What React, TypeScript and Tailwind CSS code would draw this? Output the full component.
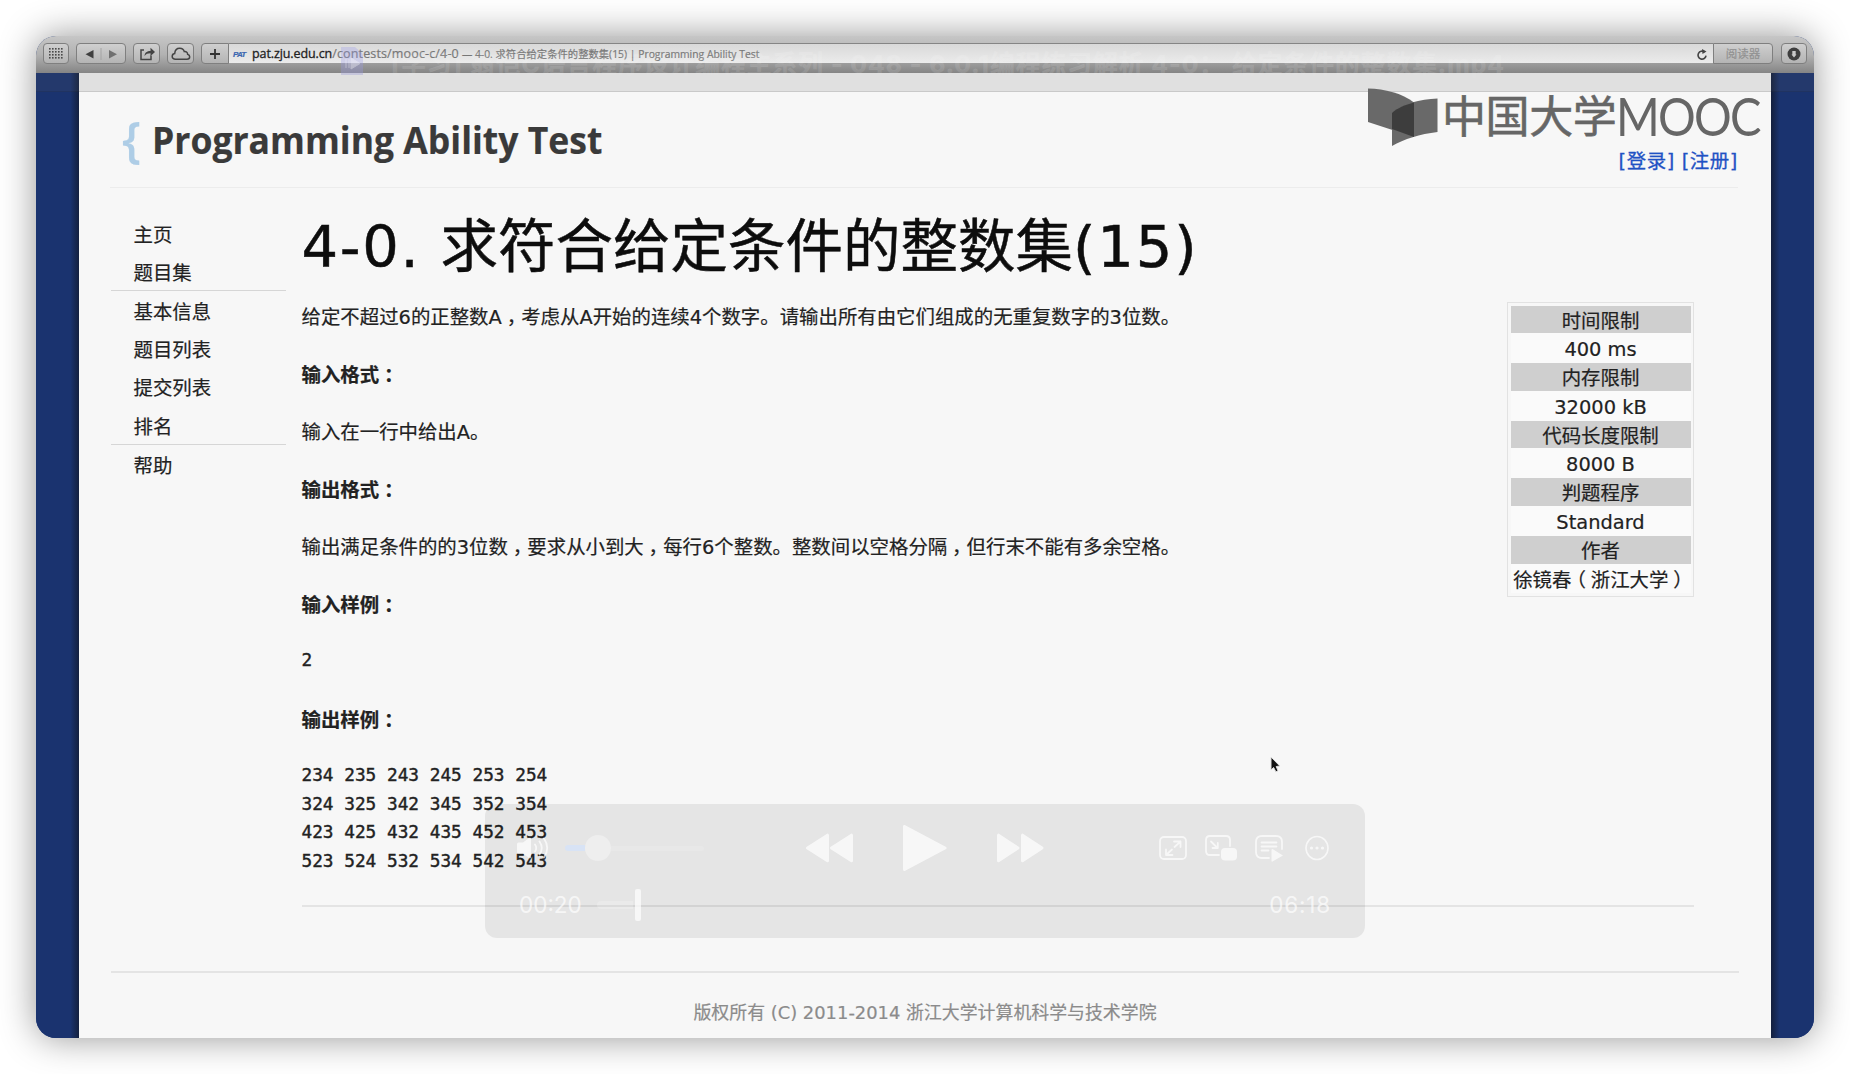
import type { ReactNode } from "react";

const ToolButton = ({ className, children }: { className: string; children?: ReactNode }) => (
  <div
    className={`flex h-[21px] shrink-0 items-center justify-center rounded-[4px] border border-[#7f7f7f] bg-gradient-to-b from-[#cfcfcf] to-[#b4b4b4] ${className}`}
  >
    {children}
  </div>
);

function Toolbar() {
  return (
    <div className="relative flex h-[37px] items-start bg-gradient-to-b from-[#c6c6c6] via-[#b2b2b2] to-[#858585] pt-[7px] pr-[7px] pl-[7px]">
      <ToolButton className="w-[26px]">
        <svg width="14" height="12" viewBox="0 0 14 12" fill="#4a4a4a">
          {[0, 1, 2, 3].map((r) =>
            [0, 1, 2, 3, 4].map((c) => <rect key={`${r}-${c}`} x={c * 3} y={r * 3} width="1.6" height="1.6" />)
          )}
        </svg>
      </ToolButton>
      <ToolButton className="ml-[7px] w-[50px]">
        <svg width="48" height="14" viewBox="0 0 48 14">
          <path d="M16.500 3v8.400L8.500 7.200z" fill="#3f3f3f" />
          <path d="M24 1v12" stroke="#a4a4a4" />
          <path d="M32 3v8.400L40 7.200z" fill="#707070" />
        </svg>
      </ToolButton>
      <ToolButton className="ml-[7px] w-[27px]">
        <svg width="18" height="16" viewBox="0 0 18 16" fill="none" stroke="#444" strokeWidth="1.500">
          <path d="M6 4H3v9.500h10V9.500" />
          <path d="M6.500 10c.4-3.600 2.400-5 6-5V1.800L17 6l-4.500 4V7.200c-2.800 0-4.500.6-6 2.800z" fill="#444" stroke="none" />
        </svg>
      </ToolButton>
      <ToolButton className="ml-[7px] w-[27px]">
        <svg width="20" height="14" viewBox="0 0 20 14" fill="none" stroke="#444" strokeWidth="1.500">
          <path d="M4.500 12.300C2.500 12.300 1.200 11 1.200 9.400c0-1.600 1-2.700 2.500-2.900C4 3 6 1.300 8.700 1.300c2.300 0 4 1.300 4.600 3.300 2.200-.3 3.300 1 3.300 2.600 1.300.3 2.100 1.300 2.100 2.600 0 1.500-1.100 2.500-2.700 2.500z" />
        </svg>
      </ToolButton>
      <ToolButton className="ml-[7px] w-[28px] rounded-r-none">
        <svg width="12" height="12" viewBox="0 0 12 12" stroke="#333" strokeWidth="1.800">
          <path d="M6 1v10M1 6h10" />
        </svg>
      </ToolButton>
      <div className="flex h-[20px] min-w-0 flex-1 items-center border-t border-[#858585] bg-gradient-to-b from-[#d9d9d9] to-[#ebebeb] pt-[2px] pr-[5px] pl-[4px] whitespace-nowrap">
        <span className="w-[19px] font-['Liberation_Sans'] text-[8px] leading-none font-bold tracking-[-0.8px] text-[#3a66b0] italic">
          PAT
        </span>
        <span className="font-['Open_Sans'] text-[12.500px] leading-none tracking-[-0.1px] text-[#222] [-webkit-text-stroke:0.3px_#222]">
          pat.zju.edu.cn
        </span>
        <span className="font-['Open_Sans'] text-[12.500px] leading-none tracking-[0.150px] text-[#777]">
          /contests/mooc-c/4-0
        </span>
        <span className="ml-[3px] font-['Open_Sans','Noto_Sans_CJK_SC'] text-[10.300px] leading-none tracking-[0.030px] text-[#777]">
          — 4-0. 求符合给定条件的整数集(15) | Programming Ability Test
        </span>
        <svg className="ml-auto" width="12" height="14" viewBox="0 0 12 14" fill="none" stroke="#444" strokeWidth="1.600">
          <path d="M8.500 4A4 4 0 1 0 10 7.600" />
          <path d="M6 1l4.500 2.500L6.500 6z" fill="#444" stroke="none" />
        </svg>
      </div>
      <ToolButton className="w-[60px] rounded-l-none">
        <span className="font-['Noto_Sans_CJK_SC'] text-[11.500px] leading-none text-[#919191]">阅读器</span>
      </ToolButton>
      <ToolButton className="ml-[8px] w-[26px]">
        <svg width="14" height="14" viewBox="0 0 14 14">
          <circle cx="7" cy="7" r="6.500" fill="#3e3e3e" />
          <path d="M5.300 4h3.400v3.500H9.500L7 10.500 4.500 7.500h.8z" fill="#c8c8c8" />
        </svg>
      </ToolButton>

      <div className="absolute top-[11px] left-[305px] flex h-[28px] items-center">
        <svg width="22" height="28" viewBox="0 0 22 28">
          <path d="M0 0h14l8 7v21H0z" fill="#9b9bea" opacity="0.32" />
          <path d="M10 11l9 5.500-9 5.500zM5 12v9M8 12v9" fill="#fff" stroke="#fff" opacity="0.35" />
        </svg>
        <span className="ml-[28px] pt-[5px] font-['Inter','Noto_Sans_CJK_SC'] text-[24.700px] leading-[28px] font-bold tracking-[1.050px] whitespace-nowrap text-white/10">
          [学习] 翁恺C语言程序设计编程主系列 - 048 - 6.0.1编程练习解析 4-0： 给定条件的整数集.mp4
        </span>
      </div>
    </div>
  );
}

function MoocLogo() {
  return (
    <div className="absolute top-[50px] left-[1332px] flex h-[60px] text-[#666]">
      <svg className="mt-[2px]" width="70" height="58" viewBox="0 0 70 58">
        <path d="M0 0.500C17 1 34 5 46 14.500V49L0 34z" fill="#696969" />
        <path d="M24 25C34 15 52 11.500 69.500 10.500V44C52 46 36 51 24 58z" fill="#696969" />
        <path d="M24 25C29 20 37 17 46 14.500V49L24 41z" fill="#3d3d3d" />
      </svg>
      <span className="ml-[4px] font-['Noto_Sans_CJK_SC'] text-[44px] leading-[57px] tracking-[-0.400px] [-webkit-text-stroke:0.6px_#666]">
        中国大学
      </span>
      <span className="origin-left scale-x-[0.89] font-['Lato'] text-[53px] leading-[59px] tracking-[-2px]">MOOC</span>
    </div>
  );
}

const navGroups = [["主页", "题目集"], ["基本信息", "题目列表", "提交列表", "排名"], ["帮助"]];

const limits = [
  ["时间限制", "400 ms"],
  ["内存限制", "32000 kB"],
  ["代码长度限制", "8000 B"],
  ["判题程序", "Standard"],
  ["作者", "徐镜春（浙江大学）"],
];

/* Sets full-width punctuation in the middle of its cell: half-width glyph plus equal side padding. */
function Centered({ children }: { children: string }) {
  return (
    <>
      {children.split(/([，：（）])/).map((part, i) =>
        /^[，：（）]$/.test(part) ? (
          <span key={i} className="px-[0.25em] [font-feature-settings:'halt']">
            {part}
          </span>
        ) : (
          part
        )
      )}
    </>
  );
}

function Sidebar() {
  return (
    <nav className="mt-[29px] w-[175px] shrink-0">
      {navGroups.map((group, i) => (
        <ul
          key={i}
          className={
            i < navGroups.length - 1
              ? "border-b border-[#d6d6d6] [&+ul]:pt-[2.800px] [&>li:last-child]:h-[35.400px]"
              : ""
          }
        >
          {group.map((item) => (
            <li key={item} className="h-[38.100px] pl-[23px] leading-[38.500px]">
              {item}
            </li>
          ))}
        </ul>
      ))}
    </nav>
  );
}

function LimitsTable() {
  return (
    <div className="mt-[114px] h-[295px] w-[187px] shrink-0 border border-[#e2e2e2] p-[2.500px] text-center">
      {limits.map(([name, value]) => (
        <div key={name}>
          <div className="h-[28.800px] border-b border-[#fafafa] bg-[#cfcfcf] leading-[31px]">{name}</div>
          <div className="h-[28.800px] bg-[#fafafa] leading-[31px] whitespace-nowrap">
            <Centered>{value}</Centered>
          </div>
        </div>
      ))}
    </div>
  );
}

const paragraphs = {
  intro: "给定不超过6的正整数A，考虑从A开始的连续4个数字。请输出所有由它们组成的无重复数字的3位数。",
  output: "输出满足条件的的3位数，要求从小到大，每行6个整数。整数间以空格分隔，但行末不能有多余空格。",
};

const Heading = ({ children }: { children: string }) => (
  <p className="font-bold">
    <Centered>{children}</Centered>
  </p>
);

function Article() {
  return (
    <article className="ml-[16px] min-w-0 flex-1 leading-[28.800px] text-[#222] [&_p]:mb-[28.800px] [&_p]:whitespace-nowrap">
      <h1 className="mt-[16px] mb-[12px] text-[57.500px] leading-[88px] whitespace-nowrap text-[#0d0d0d] [-webkit-text-stroke:0.5px_#0d0d0d]">
        <span className="tracking-[1.700px]">4-0. </span>求符合给定条件的整数集
        <span className="tracking-[1.900px]">(15)</span>
      </h1>
      <p>
        <Centered>{paragraphs.intro}</Centered>
      </p>
      <Heading>输入格式：</Heading>
      <p>输入在一行中给出A。</p>
      <Heading>输出格式：</Heading>
      <p>
        <Centered>{paragraphs.output}</Centered>
      </p>
      <Heading>输入样例：</Heading>
      <pre className="mt-[-4px] mb-[32.800px] font-['DejaVu_Sans_Mono'] text-[17.750px] [-webkit-text-stroke:0.4px_#222]">2</pre>
      <Heading>输出样例：</Heading>
      <pre className="mt-[-4px] font-['DejaVu_Sans_Mono'] text-[17.750px] [-webkit-text-stroke:0.4px_#222]">
        {"234 235 243 245 253 254\n324 325 342 345 352 354\n423 425 432 435 452 453\n523 524 532 534 542 543"}
      </pre>
    </article>
  );
}

function Player() {
  return (
    <div className="absolute top-[768px] left-[449px] h-[134px] w-[880px] rounded-[12px] bg-black/[0.07] font-['Inter'] text-white [&_svg]:opacity-70">
      <div className="flex h-[88px] items-center pl-[32px]">
        <svg width="32" height="26" viewBox="0 0 32 26" fill="none" stroke="currentColor" strokeWidth="1.800" strokeLinecap="round">
          <path d="M0 9q0-1.500 1.500-1.500H6L12 3q2-1 2 1v18q0 2-2 1L6 18.500H1.500Q0 18.500 0 17z" fill="currentColor" stroke="none" />
          <path d="M18 9.500q2.500 3.500 0 7M22.500 6.500q4.500 6.500 0 13M27 3.500q6.500 9.500 0 19" />
        </svg>
        <div className="ml-[16px] flex w-[139px] items-center">
          <div className="h-[6px] w-[20px] rounded-l-full bg-[#d8e3f5]" />
          <div className="h-[26px] w-[26px] rounded-full bg-[#eeeeee]" />
          <div className="h-[5px] flex-1 rounded-r-full bg-white/10" />
        </div>
        <svg className="ml-[102px]" width="47" height="32" viewBox="0 0 47 32" fill="currentColor" stroke="currentColor" strokeWidth="3" strokeLinejoin="round">
          <path d="M1.500 16L21.500 3.200v25.600zM25.500 16L45.500 3.200v25.600z" />
        </svg>
        <svg className="ml-[50px]" width="44" height="56" viewBox="0 0 44 56" fill="currentColor" stroke="currentColor" strokeWidth="3" strokeLinejoin="round">
          <path d="M1.500 6.500v43L42 28z" />
        </svg>
        <svg className="ml-[50px]" width="47" height="32" viewBox="0 0 47 32" fill="currentColor" stroke="currentColor" strokeWidth="3" strokeLinejoin="round">
          <path d="M1.500 3.200v25.600L21 16zM25.500 3.200v25.600L45 16z" />
        </svg>
        <svg className="ml-[115px]" width="28" height="26" viewBox="0 0 28 26" fill="none" stroke="currentColor" strokeWidth="1.800" strokeLinecap="round" strokeLinejoin="round">
          <rect x="1" y="2" width="26" height="22" rx="4" />
          <path d="M15 6.500h6.500V12M21.500 6.500L15.500 12M13.500 20H7v-5.500M7 20l6-5.500" />
        </svg>
        <svg className="ml-[18px]" width="32" height="26" viewBox="0 0 32 26" fill="none" stroke="currentColor" strokeWidth="1.800" strokeLinecap="round" strokeLinejoin="round">
          <path d="M14 20H5q-4 0-4-4V5q0-4 4-4h16q4 0 4 4v6" />
          <path d="M6 6.500l6.500 6.500M12.800 8v5H7.500" />
          <rect x="16" y="13" width="16" height="12.500" rx="4" fill="currentColor" stroke="none" />
        </svg>
        <svg className="ml-[18px]" width="28" height="28" viewBox="0 0 28 28" fill="none" stroke="currentColor" strokeWidth="1.800" strokeLinecap="round">
          <path d="M14 24H7q-6 0-6-6V8q0-6 6-6h14q6 0 6 6v7M6.500 8.500h15M6.500 12.500h15M6.500 16.500h7" />
          <path d="M16.500 15.500v11.500q0 1 1 .5L28 21.500 17.500 15z" fill="currentColor" stroke="none" />
        </svg>
        <svg className="ml-[22px]" width="24" height="26" viewBox="0 0 24 26" fill="none" stroke="currentColor" strokeWidth="1.600">
          <ellipse cx="12" cy="13" rx="11" ry="11.500" />
          <path d="M6.500 13h.01M12 13h.01M17.500 13h.01" strokeWidth="3.200" strokeLinecap="round" />
        </svg>
      </div>
      <div className="flex h-[26px] items-center pr-[34px] pl-[34px] text-[22.500px] leading-[26px] text-white/70">
        <span className="w-[62px]">00:20</span>
        <div className="ml-[16px] h-[8px] w-[36px] rounded-l-full bg-white/20" />
        <div className="ml-[2px] h-[32px] w-[6px] rounded-[2px] bg-current" />
        <div className="ml-[2px] h-[8px] flex-1" />
        <span className="text-right tracking-[0.8px]">06:18</span>
      </div>
    </div>
  );
}

export default function App() {
  return (
    <div className="h-[1074px] w-[1850px] overflow-hidden bg-white pt-[36px] pl-[36px]">
      <div className="relative h-[1002px] w-[1778px] rounded-[20px] shadow-[0_0_36px_rgba(0,0,0,0.42)]">
        <div className="flex h-full flex-col overflow-hidden rounded-[20px] bg-[#1a336f] font-['DejaVu_Sans','Noto_Sans_CJK_SC'] text-[19.420px] text-[#222] [-webkit-text-stroke:0.2px]">
          <Toolbar />
          <div className="flex min-h-0 flex-1">
            <div className="w-[43px] bg-linear-to-r from-[#1a336f] from-80% to-[#14203f]" />
            <main className="flex w-[1692px] flex-col bg-[#f7f7f7]">
              <header className="mr-[33px] ml-[31px] flex h-[115px] shrink-0 items-start justify-between border-b border-[#ececec]">
                <div className="flex pt-[41px] pl-[12px] font-['Open_Sans'] font-bold">
                  <span className="w-[30px] pt-[-1px] text-[49px] leading-[49px] font-semibold text-[#aecde6]">{"{"}</span>
                  <span className="origin-left scale-x-[0.960] pt-[1px] text-[37px] leading-[50px] whitespace-nowrap text-[#3a3a3a]">
                    Programming Ability Test
                  </span>
                </div>
                <div className="mt-[74px] leading-[29px] tracking-[0.600px] text-[#1f52c4] [-webkit-text-stroke:0.3px_#1f52c4]">
                  [登录] [注册]
                </div>
              </header>
              <div className="flex h-[783px] shrink-0 pr-[77px] pl-[31.500px]">
                <Sidebar />
                <Article />
                <LimitsTable />
              </div>
              <footer className="mr-[32px] ml-[32px] flex-1 border-t-2 border-[#e4e4e4] pt-[25px] text-center text-[17.900px] leading-[29px] text-[#8b8b8b]">
                版权所有 (C) 2011-2014 浙江大学计算机科学与技术学院
              </footer>
            </main>
            <div className="flex-1 bg-linear-to-r from-[#141f3d] to-[#1a336f] to-20%" />
          </div>
        </div>
        <div className="absolute top-[37px] left-0 h-[19px] w-full border-b border-black/10 bg-[#606060]/15" />
        <div className="absolute top-[869px] left-[266px] h-[2px] w-[1392px] bg-[#e4e4e4]" />
        <MoocLogo />
        <Player />
        <svg className="absolute top-[719px] left-[1233px]" width="14" height="20" viewBox="0 0 14 20">
          <path d="M2 2v13l2.600-2.500 2.300 4.300 2.100-1L7.200 11.500l3.600-.5z" fill="#111" stroke="#ddd" strokeWidth="1" />
        </svg>
      </div>
    </div>
  );
}
